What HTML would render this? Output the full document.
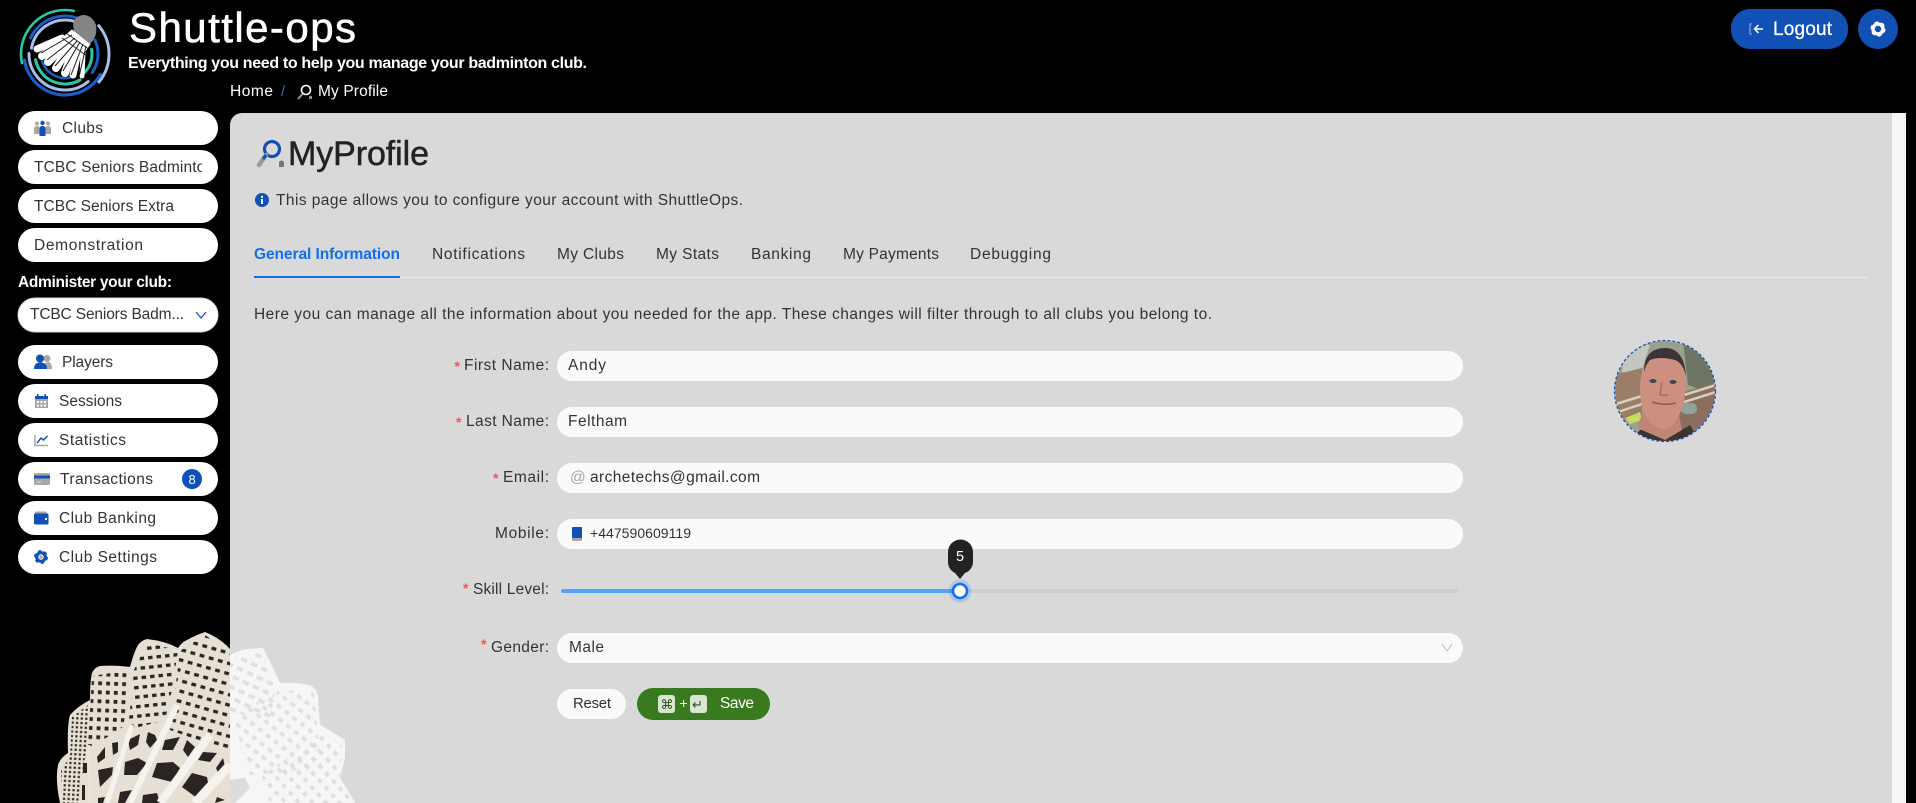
<!DOCTYPE html>
<html lang="en"><head><meta charset="utf-8"><title>Shuttle-ops</title>
<style>
html,body{margin:0;padding:0;background:#000;width:1916px;height:803px;overflow:hidden}
svg{display:block}
text{font-family:"Liberation Sans",sans-serif;font-size:15.5px;fill:#333}
.w{fill:#fff}
.sym{font-family:"DejaVu Sans",sans-serif}
.st{fill:#ff4d4f;font-size:14px;font-weight:700}
</style></head><body>
<svg width="1916" height="803" viewBox="0 0 1916 803" xmlns="http://www.w3.org/2000/svg">
<defs>
<clipPath id="left"><rect x="0" y="600" width="230" height="203"/></clipPath>
<clipPath id="pill"><rect x="18" y="150" width="184" height="34"/></clipPath>
<clipPath id="av"><circle cx="1665" cy="391" r="50"/></clipPath>
<pattern id="h1" width="4.5" height="4.5" patternUnits="userSpaceOnUse" patternTransform="rotate(3)"><rect x="1.2" y="1.2" width="2.200" height="2.200" fill="#2b2622"/></pattern>
<pattern id="h2" width="8" height="9" patternUnits="userSpaceOnUse" patternTransform="rotate(2)"><rect x="2" y="2.500" width="3.800" height="3.800" fill="#2b2622"/></pattern>
<pattern id="h3" width="8.500" height="9.500" patternUnits="userSpaceOnUse" patternTransform="rotate(-6)"><rect x="2" y="3" width="4.500" height="3.300" fill="#2b2622"/></pattern>
<pattern id="h4" width="9.500" height="10" patternUnits="userSpaceOnUse" patternTransform="rotate(16)"><rect x="2" y="3" width="4.800" height="3.300" fill="#2b2622"/></pattern>
<pattern id="r1" width="11" height="10" patternUnits="userSpaceOnUse" patternTransform="rotate(25)"><rect x="2" y="3" width="6.500" height="3.800" fill="#e0e0e0"/></pattern>
<pattern id="r2" width="10" height="10" patternUnits="userSpaceOnUse" patternTransform="rotate(38)"><rect x="2" y="3" width="5" height="3.800" fill="#e0e0e0"/></pattern>
<pattern id="r3" width="10" height="10" patternUnits="userSpaceOnUse" patternTransform="rotate(48)"><rect x="2" y="3" width="4.500" height="3.800" fill="#dedede"/></pattern>
</defs>

<rect width="1916" height="803" fill="#000"/>

<!-- main panel -->
<path d="M230 125a12 12 0 0 1 12-12H1892V803H230Z" fill="#d9d9d9"/>
<rect x="1892" y="113" width="14" height="690" fill="#f6f6f6"/>

<!-- background shuttle: left part -->
<g clip-path="url(#left)">
<path d="M60 803Q55 780 58 765Q60 758 68 753Q67 725 70 715Q78 706 90 700Q90 680 92 673Q95 667 100 666Q115 665 130 667Q134 652 138 645Q142 640 147 639Q165 641 178 648Q182 642 187 640Q196 635 205 632Q220 638 230 649V803Z" fill="#e6e0d4"/>
<path d="M61 770L70 757L72 717L88 705L87 745L78 803H62Z" fill="url(#h1)"/>
<path d="M92 676L130 670L128 700L123 727L95 745L88 747Z" fill="url(#h2)"/>
<path d="M134 670L147 643L178 650L172 690L165 720L128 730Z" fill="url(#h3)"/>
<path d="M180 651L205 635L230 652V752L170 730Z" fill="url(#h4)"/>
<g fill="#2a2522">
<path d="M97 757L105 747L105 758L98 763Z"/><path d="M112 743L118 742L118 752L113 755Z"/>
<path d="M128 740L140 734L138 745L130 750Z"/><path d="M148 732L155 735L157 740L150 748L146 742Z"/>
<path d="M165 740L180 737L173 750L162 750Z"/><path d="M187 740L195 747L188 757L183 750Z"/>
<path d="M203 752L217 753L210 762L198 760Z"/><path d="M223 758L227 775L220 777L216 768Z"/>
<path d="M98 770L113 767L112 775L100 787Z"/><path d="M125 762L138 758L147 763L137 775L124 775Z"/>
<path d="M157 763L173 762L180 768L172 782L152 777Z"/><path d="M192 773L207 777L209 788L197 798L182 787Z"/>
<path d="M82 785L85 785L85 800L82 800Z"/><path d="M83 763L87 763L87 773L83 773Z"/>
<path d="M98 798L105 797L103 803H98Z"/><path d="M120 792L132 790L125 803H118Z"/>
<path d="M143 795L157 793L160 803H142Z"/><path d="M217 797L225 800L215 803Z"/>
</g>
<g stroke="#f6f3ee" fill="none">
<path d="M107 803L132 725" stroke-width="5"/><path d="M130 803L177 705" stroke-width="6"/>
<path d="M160 803L210 735" stroke-width="8"/><path d="M195 803L230 765" stroke-width="9"/>
<path d="M90 803L89 745" stroke-width="3" stroke="#e9e4da"/>
</g>
</g>

<!-- background shuttle: right part -->
<path d="M230 655Q240 650 247 649L263 648Q272 665 280 683Q296 682 310 685Q318 690 318 698L320 725Q333 732 345 740L345 758L340 778Q348 790 355 803H230Z" fill="#f6f6f6"/>
<path d="M230 658L262 652L276 686L270 720L230 712Z" fill="url(#r1)"/>
<path d="M232 716L280 690L314 692L317 727L322 770L250 775Z" fill="url(#r2)"/>
<path d="M262 776L324 732L342 745L340 778L352 803H270Z" fill="url(#r3)"/>
<path d="M230 780L245 778L250 788L235 803H230Z" fill="#dcdcdc"/>

<!-- logo -->
<g fill="none" stroke-linecap="round">
<circle cx="65" cy="54" r="44" stroke="#2ac9a2" stroke-width="2.600" stroke-dasharray="87 300" transform="rotate(168 65 54)"/>
<circle cx="65" cy="54" r="41" stroke="#1b5cc6" stroke-width="3.200" stroke-dasharray="101 300" transform="rotate(30 65 54)"/>
<circle cx="65" cy="54" r="38" stroke="#1b5cc6" stroke-width="3" stroke-dasharray="60 300" transform="rotate(205 65 54)"/>
<circle cx="65" cy="54" r="44" stroke="#a9bdea" stroke-width="3" stroke-dasharray="61 300" transform="rotate(-40 65 54)"/>
<circle cx="65" cy="54" r="36" stroke="#a9bdea" stroke-width="3" stroke-dasharray="82 300" transform="rotate(50 65 54)"/>
<circle cx="65" cy="54" r="34" stroke="#a9bdea" stroke-width="3" stroke-dasharray="60 300" transform="rotate(190 65 54)"/>
<circle cx="65" cy="54" r="30" stroke="#2ac9a2" stroke-width="3" stroke-dasharray="57 300" transform="rotate(60 65 54)"/>
<circle cx="65" cy="54" r="33" stroke="#1b5cc6" stroke-width="3" stroke-dasharray="34 300" transform="rotate(-25 65 54)"/>
<circle cx="65" cy="54" r="27" stroke="#2ac9a2" stroke-width="3" stroke-dasharray="25 300" transform="rotate(-10 65 54)"/>
<circle cx="65" cy="54" r="24" stroke="#1b5cc6" stroke-width="2.500" stroke-dasharray="40 300" transform="rotate(70 65 54)"/>
</g>
<g stroke="#fff" fill="none" stroke-linecap="round">
<path d="M62 38L37 49" stroke-width="7"/><path d="M64 41L42 56" stroke-width="8"/>
<path d="M66 44L48 62" stroke-width="8"/><path d="M69 47L56 68" stroke-width="8"/>
<path d="M73 50L65 73" stroke-width="8"/><path d="M78 52L73 75" stroke-width="7"/>
<path d="M83 53L82 76" stroke-width="5"/>
<path d="M72 30L90 44L84 53L60 40Z" stroke-width="1" fill="#fff"/>
</g>
<g stroke="#1a1a1a" stroke-width="1" fill="none">
<path d="M72 35L41 53"/><path d="M75 38L47 60"/><path d="M77 41L55 66"/><path d="M80 42L63 71"/><path d="M83 44L71 75"/><path d="M86 46L79 77"/>
<path d="M66 33L90 50" stroke-width=".8"/><path d="M62 38L87 56" stroke-width=".8"/>
</g>
<path d="M74 31L90 44Q98 36 96 25Q92 15 83 15Q75 16 73 24Z" fill="#858585"/>

<!-- header text -->
<text x="129" y="42" class="w" style="font-size:42px;stroke:#fff;stroke-width:.6" textLength="227" lengthAdjust="spacing">Shuttle-ops</text>
<text x="128" y="68" class="w" style="font-size:16px;font-weight:600" textLength="459" lengthAdjust="spacing">Everything you need to help you manage your badminton club.</text>
<text x="230" y="96" class="w" style="font-size:15.500px" textLength="43" lengthAdjust="spacing">Home</text>
<text x="281" y="96" style="fill:#3b6fb8;font-size:15px">/</text>
<g fill="none"><circle cx="306" cy="90" r="4.500" stroke="#fff" stroke-width="1.600"/><path d="M302.500 94L298 99" stroke="#999" stroke-width="2"/><rect x="309" y="96" width="3" height="3" fill="#888"/></g>
<text x="318" y="96" class="w" style="font-size:15.500px" textLength="70" lengthAdjust="spacing">My Profile</text>

<!-- logout -->
<rect x="1731" y="9" width="117" height="40" rx="19" fill="#1150b4"/>
<path d="M1752 24H1750V34H1752" stroke="#6d95d8" stroke-width="1.500" fill="none"/>
<path d="M1763 29H1755M1758.500 25L1754.500 29L1758.500 33" stroke="#fff" stroke-width="1.500" fill="none"/>
<text x="1773" y="35" class="w" style="font-size:19px;stroke:#fff;stroke-width:.3" textLength="59" lengthAdjust="spacing">Logout</text>
<circle cx="1878" cy="29" r="20" fill="#1150b4"/>
<g fill="none" stroke="#fff"><circle cx="1878" cy="29" r="5" stroke-width="3.500"/><circle cx="1878" cy="29" r="6.300" stroke-width="2.600" stroke-dasharray="3.300 3.300"/></g>

<!-- sidebar pills -->
<g fill="#fff">
<rect x="18" y="111" width="200" height="34" rx="17"/>
<rect x="18" y="150" width="200" height="34" rx="17"/>
<rect x="18" y="189" width="200" height="34" rx="17"/>
<rect x="18" y="228" width="200" height="34" rx="17"/>
<rect x="18" y="298" width="200" height="34" rx="17" stroke="#d9d9d9"/>
<rect x="18" y="345" width="200" height="34" rx="17"/>
<rect x="18" y="384" width="200" height="34" rx="17"/>
<rect x="18" y="423" width="200" height="34" rx="17"/>
<rect x="18" y="462" width="200" height="34" rx="17"/>
<rect x="18" y="501" width="200" height="34" rx="17"/>
<rect x="18" y="540" width="200" height="34" rx="17"/>
</g>
<!-- sidebar icons -->
<g fill="#a8a8a8"><circle cx="37" cy="123.500" r="2"/><circle cx="48" cy="123.500" r="2"/><path d="M34 134V129q0-3 3-3t3 3v5ZM45 134V129q0-3 3-3t3 3v5Z"/></g>
<g fill="#1150b4"><circle cx="42.500" cy="123" r="2.200"/><path d="M39.500 136V129q0-3 3-3t3 3v7Z"/></g>

<g fill="#a8a8a8"><circle cx="47" cy="358.500" r="3.500"/><path d="M44 369q0-7 4-7t4 7Z"/></g>
<g fill="#1150b4"><circle cx="40" cy="358.500" r="4"/><path d="M34 369q0-6.500 6.500-6.500T47 369Z"/></g>

<rect x="35" y="396" width="13" height="12" fill="#a8a8a8"/><rect x="35" y="396" width="13" height="3" fill="#1150b4"/>
<rect x="37" y="394" width="1.500" height="3" fill="#1150b4"/><rect x="44.500" y="394" width="1.500" height="3" fill="#1150b4"/>
<g fill="#fff"><rect x="37" y="401" width="2" height="2"/><rect x="40.500" y="401" width="2" height="2"/><rect x="44" y="401" width="2" height="2"/><rect x="37" y="404.500" width="2" height="2"/><rect x="40.500" y="404.500" width="2" height="2"/><rect x="44" y="404.500" width="2" height="2"/></g>

<path d="M35 435V445.500H48" fill="none" stroke="#a8a8a8" stroke-width="1.500"/>
<path d="M37 443L41 438L43.500 440L47.500 436" fill="none" stroke="#1150b4" stroke-width="1.500"/>

<rect x="34" y="473" width="16" height="12" rx="1.500" fill="#a8a8a8"/><rect x="34" y="475.500" width="16" height="3" fill="#1150b4"/><rect x="37" y="481.500" width="4" height="1" fill="#ddd"/>

<rect x="35" y="511.500" width="12" height="5" rx="1.500" fill="#a8a8a8"/><rect x="34" y="513.500" width="14.500" height="11" rx="1.500" fill="#1150b4"/><rect x="45" y="518" width="2" height="2" fill="#fff"/>

<g fill="none"><circle cx="41" cy="557" r="4.300" stroke="#1150b4" stroke-width="3.200"/><circle cx="41" cy="557" r="5.800" stroke="#1150b4" stroke-width="2.400" stroke-dasharray="3 3.070"/><circle cx="41" cy="557" r="1.800" fill="#a8a8a8"/></g>

<!-- sidebar text -->
<text x="62" y="133" textLength="41" lengthAdjust="spacing">Clubs</text>
<g clip-path="url(#pill)"><text x="34" y="172" textLength="180" lengthAdjust="spacing">TCBC Seniors Badminton</text></g>
<text x="34" y="211" textLength="140" lengthAdjust="spacing">TCBC Seniors Extra</text>
<text x="34" y="250" textLength="109" lengthAdjust="spacing">Demonstration</text>
<text x="18" y="287" class="w" textLength="154" lengthAdjust="spacing" style="font-weight:600">Administer your club:</text>
<text x="30" y="319" textLength="154" lengthAdjust="spacing">TCBC Seniors Badm...</text>
<path d="M196 312L201 318L206 312" fill="none" stroke="#1150b4" stroke-width="1.200"/>
<text x="62" y="367" textLength="51" lengthAdjust="spacing">Players</text>
<text x="59" y="406" textLength="63" lengthAdjust="spacing">Sessions</text>
<text x="59" y="445" textLength="67" lengthAdjust="spacing">Statistics</text>
<text x="60" y="484" textLength="93" lengthAdjust="spacing">Transactions</text>
<circle cx="192" cy="479" r="10" fill="#1150b4"/>
<text x="188.500" y="484" class="w" style="font-size:13px">8</text>
<text x="59" y="523" textLength="97" lengthAdjust="spacing">Club Banking</text>
<text x="59" y="562" textLength="98" lengthAdjust="spacing">Club Settings</text>

<!-- page heading -->
<g fill="none"><circle cx="272" cy="149" r="7.500" stroke="#1150b4" stroke-width="3.200" transform="rotate(20 272 149)"/><path d="M266 155L259 165" stroke="#9a9a9a" stroke-width="4.500" stroke-linecap="round"/><path d="M266 155L263 159" stroke="#1150b4" stroke-width="3"/></g>
<path d="M279 167V163a2.500 2.500 0 0 1 5 0v4Z" fill="#777"/>
<text x="288" y="165" style="font-size:34px;fill:#222;stroke:#222;stroke-width:.5" textLength="141" lengthAdjust="spacing">MyProfile</text>
<circle cx="262" cy="200" r="7" fill="#1150b4"/><rect x="261" y="199" width="2" height="5" fill="#fff"/><rect x="261" y="195.800" width="2" height="2" fill="#fff"/>
<text x="276" y="205" textLength="467" lengthAdjust="spacing">This page allows you to configure your account with ShuttleOps.</text>

<!-- tabs -->
<text x="254" y="259" style="fill:#0f6fee;font-weight:600" textLength="146" lengthAdjust="spacing">General Information</text>
<text x="432" y="259" textLength="93" lengthAdjust="spacing">Notifications</text>
<text x="557" y="259" textLength="67" lengthAdjust="spacing">My Clubs</text>
<text x="656" y="259" textLength="63" lengthAdjust="spacing">My Stats</text>
<text x="751" y="259" textLength="60" lengthAdjust="spacing">Banking</text>
<text x="843" y="259" textLength="96" lengthAdjust="spacing">My Payments</text>
<text x="970" y="259" textLength="81" lengthAdjust="spacing">Debugging</text>
<rect x="254" y="277" width="1614" height="1" fill="#ebebeb"/>
<rect x="254" y="276" width="146" height="2" fill="#0f6fee"/>
<text x="254" y="319" textLength="958" lengthAdjust="spacing">Here you can manage all the information about you needed for the app. These changes will filter through to all clubs you belong to.</text>

<!-- form inputs -->
<g fill="#fafafa">
<rect x="557" y="351" width="906" height="30" rx="15"/>
<rect x="557" y="407" width="906" height="30" rx="15"/>
<rect x="557" y="463" width="906" height="30" rx="15"/>
<rect x="557" y="519" width="906" height="30" rx="15"/>
<rect x="557" y="633" width="906" height="30" rx="15"/>
</g>
<!-- labels -->
<text x="454.500" y="371" class="st">*</text><text x="456" y="427" class="st">*</text><text x="493" y="483" class="st">*</text><text x="463" y="593" class="st">*</text><text x="481" y="649" class="st">*</text>
<text x="464" y="370" textLength="85" lengthAdjust="spacing">First Name:</text>
<text x="466" y="426" textLength="83" lengthAdjust="spacing">Last Name:</text>
<text x="503" y="482" textLength="46" lengthAdjust="spacing">Email:</text>
<text x="495" y="538" textLength="54" lengthAdjust="spacing">Mobile:</text>
<text x="473" y="594" textLength="76" lengthAdjust="spacing">Skill Level:</text>
<text x="491" y="652" textLength="58" lengthAdjust="spacing">Gender:</text>
<!-- values -->
<text x="568" y="370" textLength="38" lengthAdjust="spacing">Andy</text>
<text x="568" y="426" textLength="59" lengthAdjust="spacing">Feltham</text>
<text x="570" y="482" style="fill:#a5a5a5" textLength="14" lengthAdjust="spacing">@</text>
<text x="590" y="482" textLength="170" lengthAdjust="spacing">archetechs@gmail.com</text>
<rect x="572" y="527" width="10" height="14" rx="1" fill="#a8a8a8"/><rect x="572" y="527" width="10" height="11" rx="1" fill="#1150b4"/>
<text x="590" y="538" style="font-size:14px" textLength="101" lengthAdjust="spacing">+447590609119</text>
<text x="569" y="652" textLength="35" lengthAdjust="spacing">Male</text>
<path d="M1442 644L1447 651L1452 644" fill="none" stroke="#bdbdbd" stroke-width="1"/>

<!-- slider -->
<rect x="561" y="589" width="898" height="4" rx="2" fill="#cfcfcf"/>
<rect x="561" y="589" width="399" height="4" rx="2" fill="#4fa5f7"/>
<circle cx="960" cy="591" r="11.500" fill="#1677ff" opacity=".2"/>
<circle cx="960" cy="591" r="7" fill="#fff" stroke="#0f6fee" stroke-width="2.600"/>
<path d="M948 552a12.500 12.500 0 0 1 25 0V562a12 12 0 0 1-8 11L960 579L955 573a12 12 0 0 1-7-11Z" fill="#222"/>
<text x="956" y="561" class="w" style="font-size:14.500px">5</text>

<!-- buttons -->
<rect x="557" y="689" width="69" height="30" rx="15" fill="#fafafa"/>
<text x="573" y="708" style="font-size:15px" textLength="38" lengthAdjust="spacing">Reset</text>
<rect x="637" y="688" width="133" height="32" rx="16" fill="#3a7a1e"/>
<rect x="658" y="695" width="17" height="18" rx="3" fill="#d8e6d2"/>
<rect x="690" y="695" width="17" height="18" rx="3" fill="#d8e6d2"/>
<text x="660.500" y="709" class="sym" style="font-size:13px;fill:#2d4d1e">⌘</text>
<text x="679.500" y="708" class="w" style="font-size:14px">+</text>
<text x="692" y="709" class="sym" style="font-size:13px;fill:#2d4d1e">↵</text>
<text x="720" y="708" class="w" textLength="34" lengthAdjust="spacing">Save</text>

<!-- avatar -->
<g clip-path="url(#av)">
<rect x="1614" y="340" width="102" height="102" fill="#9aa090"/>
<path d="M1625 345H1650L1640 375L1622 372Z" fill="#c3c7bd"/>
<path d="M1683 340H1716V395L1688 385Z" fill="#6c7663"/>
<path d="M1614 375L1642 368V418L1618 420Z" fill="#9c7d68"/>
<path d="M1685 392L1716 382V425L1690 442H1670Z" fill="#8a6f60"/>
<g fill="none" stroke="#d8cfbd" stroke-width="2.500"><path d="M1684 395L1716 385"/><path d="M1684 402L1716 392"/><path d="M1616 404L1642 396"/><path d="M1618 412L1642 404"/></g>
<rect x="1681" y="403" width="16" height="11" rx="5" fill="#8fa49a"/>
<path d="M1625 418L1640 412L1642 420L1630 424Z" fill="#c8d860"/>
<path d="M1630 442Q1640 425 1652 428Q1668 440 1690 425L1700 442Z" fill="#3d342e"/>
<path d="M1645 405L1637 428L1665 440L1682 430L1678 410Z" fill="#bf8677"/>
<path d="M1645 362Q1639 378 1640 392Q1641 412 1652 424Q1663 433 1672 426Q1685 410 1685 392Q1686 375 1683 362Q1665 352 1645 362Z" fill="#cc8f80"/>
<path d="M1644 372Q1644 348 1665 348Q1684 348 1686 376Q1683 363 1675 360Q1660 356 1650 360Q1646 364 1644 372Z" fill="#3a3438"/>
<ellipse cx="1653" cy="381" rx="3.500" ry="2" fill="#3b4a50"/><ellipse cx="1673" cy="382" rx="3.500" ry="2" fill="#3b4a50"/>
<path d="M1662 382L1660 394Q1664 397 1668 394" fill="none" stroke="#a86c5e" stroke-width="1.500"/>
<path d="M1652 402Q1664 406 1676 403" fill="none" stroke="#8d5a50" stroke-width="1.500"/>
</g>
<circle cx="1665" cy="391" r="50.500" fill="none" stroke="#1150b4" stroke-width="1.200" stroke-dasharray="3 2"/>
</svg>
</body></html>
